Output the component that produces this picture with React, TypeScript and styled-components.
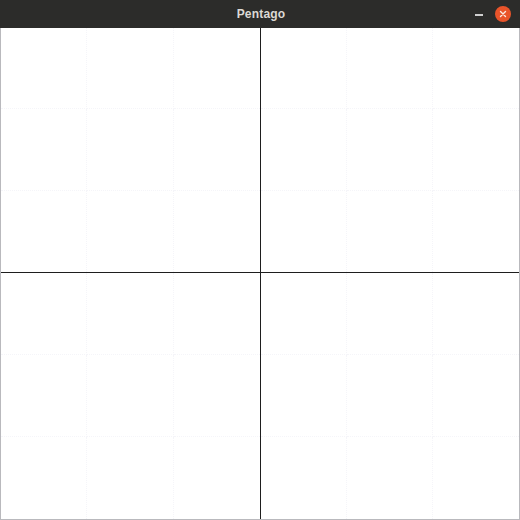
import styled, { createGlobalStyle } from 'styled-components';

const GlobalStyle = createGlobalStyle`
	html, body {
		margin: 0;
		padding: 0;
		background: #ffffff;
	}
`;

const Window = styled.div`
	width: 520px;
	height: 520px;
	display: flex;
	flex-direction: column;
	font-family: 'Liberation Sans', 'Noto Sans', sans-serif;
`;

const TitleBar = styled.div`
	height: 28px;
	flex-shrink: 0;
	background: #2c2c2a;
	display: flex;
	align-items: center;
	justify-content: center;
	position: relative;
`;

const Title = styled.span`
	color: #dcd9d4;
	font-size: 12px;
	font-weight: bold;
	letter-spacing: 0.2px;
	margin-left: 2px;
`;

const Controls = styled.div`
	position: absolute;
	right: 9px;
	top: 0;
	height: 28px;
	display: flex;
	align-items: center;
	gap: 12px;
`;

const Minimize = styled.div`
	width: 8px;
	height: 2px;
	background: #cfcfcf;
	margin-top: 2px;
`;

const Close = styled.div`
	width: 16px;
	height: 16px;
	border-radius: 50%;
	background: #e9542a;
	display: flex;
	align-items: center;
	justify-content: center;
`;

const Board = styled.div`
	flex: 1;
	display: grid;
	grid-template-columns: 259px 1px 1fr;
	grid-template-rows: 244px 1px 1fr;
	border: 1px solid #b9b9bd;
	border-top: none;
	background: #ffffff;
`;

const Quadrant = styled.div`
	display: grid;
	grid-template-columns: repeat(3, 1fr);
	grid-template-rows: repeat(3, 1fr);
`;

const Cell = styled.div<{ $right: boolean; $bottom: boolean }>`
	border-right: ${p => (p.$right ? '1px dotted #f5f5f9' : 'none')};
	border-bottom: ${p => (p.$bottom ? '1px dotted #f5f5f9' : 'none')};
`;

const Line = styled.div`
	background: #1e1e1e;
`;

function QuadrantCells() {
	return (
		<Quadrant>
			{Array.from({ length: 9 }).map((_, i) => (
				<Cell key={i} $right={i % 3 !== 2} $bottom={i < 6} />
			))}
		</Quadrant>
	);
}

export default function App() {
	return (
		<>
			<GlobalStyle />
			<Window>
				<TitleBar>
					<Title>Pentago</Title>
					<Controls>
						<Minimize />
						<Close>
							<svg width="8" height="8" viewBox="0 0 8 8">
								<path d="M1.5 1.5 L6.5 6.5 M6.5 1.5 L1.5 6.5" stroke="#fbe9e2" strokeWidth="1.4" strokeLinecap="round" />
							</svg>
						</Close>
					</Controls>
				</TitleBar>
				<Board>
					<QuadrantCells />
					<Line />
					<QuadrantCells />
					<Line />
					<Line />
					<Line />
					<QuadrantCells />
					<Line />
					<QuadrantCells />
				</Board>
			</Window>
		</>
	);
}
